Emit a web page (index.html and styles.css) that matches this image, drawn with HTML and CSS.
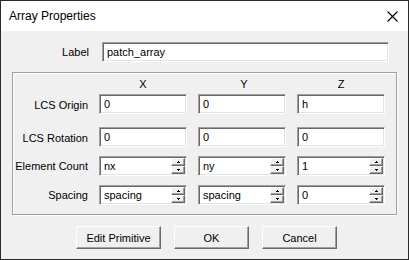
FILE: index.html
```html
<!DOCTYPE html>
<html>
<head>
<meta charset="utf-8">
<link rel="stylesheet" href="styles.css">
</head>
<body>
<div class="window">
  <div class="titlebar">
    <span class="title">Array Properties</span>
    <svg class="close" width="11" height="11" viewBox="0 0 11 11"><path d="M0.5 0.5 L10.5 10.5 M10.5 0.5 L0.5 10.5" stroke="#000" stroke-width="1.1" fill="none"/></svg>
  </div>
  <div class="content">
    <div class="label-row">
      <span class="lbl">Label</span>
      <div class="edit wide">patch_array</div>
    </div>
    <div class="group">
      <span></span><span class="hdr">X</span><span class="hdr hy">Y</span><span class="hdr">Z</span>

      <span class="rowlbl low">LCS Origin</span>
      <div class="edit">0</div><div class="edit">0</div><div class="edit">h</div>

      <span class="rowlbl low">LCS Rotation</span>
      <div class="edit">0</div><div class="edit">0</div><div class="edit">0</div>

      <span class="rowlbl">Element Count</span>
      <div class="edit spin">nx<span class="spinner"><span class="sb"><svg width="3" height="2" viewBox="0 0 3 2"><rect x="1" y="0" width="1" height="1"/><rect x="0" y="1" width="3" height="1"/></svg></span><span class="sb"><svg width="3" height="2" viewBox="0 0 3 2"><rect x="0" y="0" width="3" height="1"/><rect x="1" y="1" width="1" height="1"/></svg></span></span></div>
      <div class="edit spin">ny<span class="spinner"><span class="sb"><svg width="3" height="2" viewBox="0 0 3 2"><rect x="1" y="0" width="1" height="1"/><rect x="0" y="1" width="3" height="1"/></svg></span><span class="sb"><svg width="3" height="2" viewBox="0 0 3 2"><rect x="0" y="0" width="3" height="1"/><rect x="1" y="1" width="1" height="1"/></svg></span></span></div>
      <div class="edit spin">1<span class="spinner"><span class="sb"><svg width="3" height="2" viewBox="0 0 3 2"><rect x="1" y="0" width="1" height="1"/><rect x="0" y="1" width="3" height="1"/></svg></span><span class="sb"><svg width="3" height="2" viewBox="0 0 3 2"><rect x="0" y="0" width="3" height="1"/><rect x="1" y="1" width="1" height="1"/></svg></span></span></div>

      <span class="rowlbl">Spacing</span>
      <div class="edit spin">spacing<span class="spinner"><span class="sb"><svg width="3" height="2" viewBox="0 0 3 2"><rect x="1" y="0" width="1" height="1"/><rect x="0" y="1" width="3" height="1"/></svg></span><span class="sb"><svg width="3" height="2" viewBox="0 0 3 2"><rect x="0" y="0" width="3" height="1"/><rect x="1" y="1" width="1" height="1"/></svg></span></span></div>
      <div class="edit spin">spacing<span class="spinner"><span class="sb"><svg width="3" height="2" viewBox="0 0 3 2"><rect x="1" y="0" width="1" height="1"/><rect x="0" y="1" width="3" height="1"/></svg></span><span class="sb"><svg width="3" height="2" viewBox="0 0 3 2"><rect x="0" y="0" width="3" height="1"/><rect x="1" y="1" width="1" height="1"/></svg></span></span></div>
      <div class="edit spin">0<span class="spinner"><span class="sb"><svg width="3" height="2" viewBox="0 0 3 2"><rect x="1" y="0" width="1" height="1"/><rect x="0" y="1" width="3" height="1"/></svg></span><span class="sb"><svg width="3" height="2" viewBox="0 0 3 2"><rect x="0" y="0" width="3" height="1"/><rect x="1" y="1" width="1" height="1"/></svg></span></span></div>
    </div>
    <div class="buttons">
      <div class="btn wide">Edit Primitive</div>
      <div class="btn">OK</div>
      <div class="btn">Cancel</div>
    </div>
  </div>
</div>
</body>
</html>
```

FILE: styles.css
```css
html, body {
  margin: 0;
  padding: 0;
  background: #f0f0f0;
}

.window {
  width: 409px;
  height: 260px;
  box-sizing: border-box;
  border: 1px solid #2b2b2b;
  display: flex;
  flex-direction: column;
  font-family: "Liberation Sans", Arial, sans-serif;
  font-size: 11px;
  color: #000;
  background: #f0f0f0;
}

.titlebar {
  height: 30px;
  flex: none;
  background: #fff;
  display: flex;
  align-items: center;
  justify-content: space-between;
  padding: 0 10px 0 8px;
}

.title {
  font-size: 12px;
}

.close {
  display: block;
}

.content {
  flex: 1;
  padding-top: 11px;
}

.label-row {
  display: flex;
  align-items: center;
  height: 20px;
}

.lbl {
  width: 88px;
  text-align: right;
  margin-right: 13px;
}

.edit {
  box-sizing: border-box;
  height: 20px;
  background: #fff;
  border: 1px solid;
  border-color: #a0a0a0 #fff #fff #a0a0a0;
  box-shadow: inset 1px 1px 0 #696969, inset -1px -1px 0 #e3e3e3;
  padding-left: 4px;
  line-height: 18px;
  white-space: nowrap;
}

.edit.wide {
  width: 287px;
}

.group {
  margin: 10px 0 0 11px;
  width: 385px;
  height: 143px;
  box-sizing: border-box;
  border: 1px solid #a0a0a0;
  box-shadow: inset 1px 1px 0 #fff, 1px 1px 0 #fff;
  display: grid;
  grid-template-columns: 75px 88px 88px 88px;
  grid-template-rows: 21px 33px 29px 29px 20px;
  column-gap: 11px;
  align-items: start;
}

.hdr {
  text-align: center;
  padding-top: 5px;
  line-height: 13px;
}

.hdr.hy {
  padding-left: 4px;
}

.rowlbl {
  text-align: right;
  line-height: 21px;
  white-space: nowrap;
}

.rowlbl.low {
  line-height: 23px;
}

.spin {
  position: relative;
}

.spinner {
  position: absolute;
  top: 1px;
  right: 1px;
  width: 14px;
  height: 16px;
  display: flex;
  flex-direction: column;
}

.sb {
  box-sizing: border-box;
  flex: 1;
  background: #f0f0f0;
  border: 1px solid;
  border-color: #fff #696969 #696969 #fff;
  box-shadow: inset -1px -1px 0 #a0a0a0;
  display: flex;
  align-items: center;
  justify-content: center;
}

.sb svg {
  display: block;
  fill: #000;
  shape-rendering: crispEdges;
}

.buttons {
  display: flex;
  gap: 13px;
  margin: 11px 0 0 75px;
}

.btn {
  box-sizing: border-box;
  width: 75px;
  height: 23px;
  background: #f0f0f0;
  border: 1px solid;
  border-color: #fff #696969 #696969 #fff;
  box-shadow: inset -1px -1px 0 #a0a0a0;
  display: flex;
  align-items: center;
  justify-content: center;
}

.btn.wide {
  width: 85px;
}
```
